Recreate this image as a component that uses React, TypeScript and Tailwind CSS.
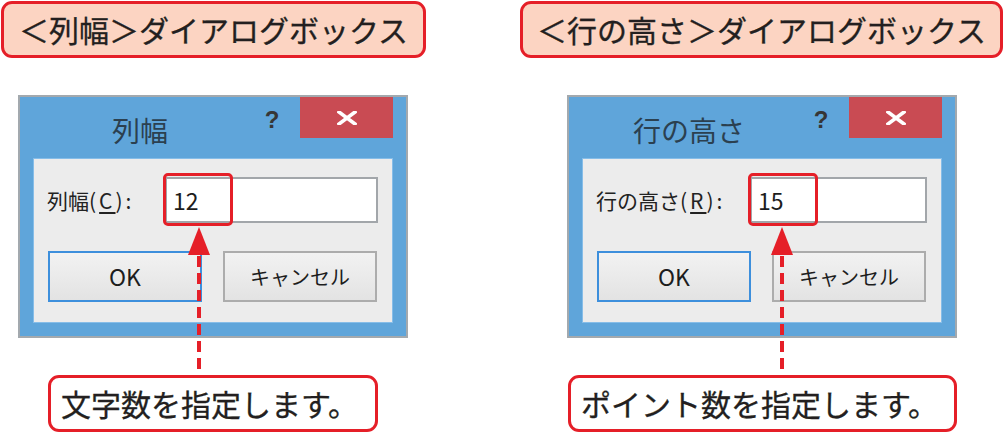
import React from "react";

const RED = "#e51f28";

type DialogProps = {
  title: string;
  label: string;
  hotkey: string;
  value: string;
  labelWidth: string;
};

// little Windows 8 style dialog
const Dialog: React.FC<DialogProps> = ({ title, label, hotkey, value, labelWidth }) => {
  return (
    <div className="w-[390px] h-[243px] border-2 border-[#a3a9ae] bg-[#5fa5da] flex flex-col">
      <div className="h-[61px] flex items-start">
        <div className="w-[240px] h-[40px] mt-[13px] text-center text-[28px] leading-[40px] text-[#2b4050]">
          {title}
        </div>
        <div className="w-[24px] mt-[9px] text-center text-[24px] leading-[28px] font-bold text-[#363636] font-['Liberation_Sans',sans-serif]">
          ?
        </div>
        <div className="ml-auto mr-[13px] w-[93px] h-[41px] bg-[#c94b53] flex items-center justify-center">
          <svg width="20" height="14" viewBox="0 0 20 14">
            <path d="M2 1 L18 13 M18 1 L2 13" stroke="#fff" strokeWidth="3.6" strokeLinecap="square" />
          </svg>
        </div>
      </div>
      <div className="mx-[13px] h-[165px] border border-[#86bde8] bg-[#ececec] flex flex-col">
        <div className="flex items-center pt-[18px] pl-[13px] pr-[14px]">
          <div className={`${labelWidth} text-[21px] leading-[46px] text-[#222]`}>
            {label}
            <span className="tracking-[3px]">
              (<span className="underline underline-offset-[3px]">{hotkey}</span>):
            </span>
          </div>
          <div className="relative flex-1 h-[46px] bg-white border-2 border-[#a2a6aa] flex items-center pl-[6px]">
            <span className="text-[23px] leading-none text-[#1d1d1d]">{value}</span>
            <div className="absolute -left-[4px] -top-[6px] w-[70px] h-[53px] border-[3px] border-[#e51f28] rounded-[5px]" />
          </div>
        </div>
        <div className="flex pl-[14px] pt-[28px] gap-[21px]">
          <div className="w-[154px] h-[51px] border-2 border-[#3d8fdc] bg-gradient-to-b from-[#f2f2f2] to-[#e3e3e3] flex items-center justify-center text-[23px] text-[#1d1d1d]">
            OK
          </div>
          <div className="w-[154px] h-[51px] border-2 border-[#acacac] bg-gradient-to-b from-[#f2f2f2] to-[#e3e3e3] flex items-center justify-center text-[20px] text-[#1d1d1d]">
            キャンセル
          </div>
        </div>
      </div>
    </div>
  );
};

const Arrow: React.FC<{ left: string }> = ({ left }) => (
  <svg className={`absolute top-[227px] ${left}`} width="24" height="148" viewBox="0 0 24 148">
    <polygon points="12,0 1,28 23,28" fill={RED} />
    <line x1="12" y1="29" x2="12" y2="148" stroke={RED} strokeWidth="4" strokeDasharray="11 6" />
  </svg>
);

const heading =
  "mt-[1px] h-[57px] border-[3px] border-[#e51f28] rounded-[11px] bg-[#fcd4c2] flex items-center justify-center text-[30px] [-webkit-text-stroke:0.3px_#231f20]";
const callout =
  "mt-[37px] h-[57px] border-[3px] border-[#e51f28] rounded-[11px] bg-white flex items-center pl-[10px] text-[30px] [-webkit-text-stroke:0.3px_#231f20]";

export default function App() {
  return (
    <div className="w-[1005px] h-[433px] bg-white flex overflow-hidden font-['Noto_Sans_CJK_JP',sans-serif] text-[#231f20]">
      <div className="relative w-[510px] flex flex-col">
        <div className={`${heading} ml-[1px] w-[425px]`}>＜列幅＞ダイアログボックス</div>
        <div className="ml-[18px] mt-[37px]">
          <Dialog title="列幅" label="列幅" hotkey="C" value="12" labelWidth="w-[118px]" />
        </div>
        <Arrow left="left-[187px]" />
        <div className={`${callout} ml-[48px] w-[330px]`}>文字数を指定します。</div>
      </div>
      <div className="relative w-[495px] flex flex-col">
        <div className={`${heading} ml-[10px] w-[483px]`}>＜行の高さ＞ダイアログボックス</div>
        <div className="ml-[57px] mt-[37px]">
          <Dialog title="行の高さ" label="行の高さ" hotkey="R" value="15" labelWidth="w-[154px]" />
        </div>
        <Arrow left="left-[260px]" />
        <div className={`${callout} ml-[58px] w-[389px]`}>ポイント数を指定します。</div>
      </div>
    </div>
  );
}
